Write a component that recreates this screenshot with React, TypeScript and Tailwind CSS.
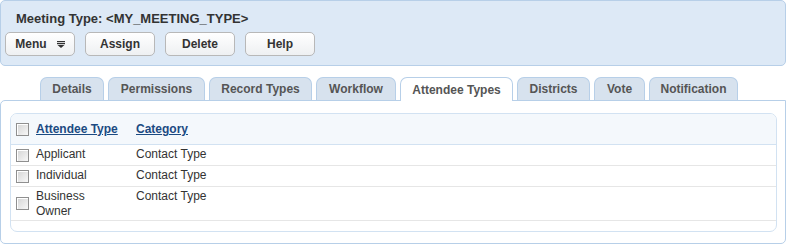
import React from 'react';

const tabs = [
  { label: 'Details', w: 'w-[64px]' },
  { label: 'Permissions', w: 'w-[97px]' },
  { label: 'Record Types', w: 'w-[103px]' },
  { label: 'Workflow', w: 'w-[80px]' },
  { label: 'Attendee Types', w: 'w-[113px]' },
  { label: 'Districts', w: 'w-[73px]' },
  { label: 'Vote', w: 'w-[51px]' },
  { label: 'Notification', w: 'w-[89px]' },
];

const rows = [
  { name: 'Applicant', category: 'Contact Type' },
  { name: 'Individual', category: 'Contact Type' },
  { name: 'Business Owner', category: 'Contact Type' },
];

const Checkbox: React.FC = () => (
  <span className="block w-[13px] h-[13px] border border-[#8f8f8f] bg-gradient-to-br from-[#d4d4d4] to-[#f8f8f8] shadow-[inset_1px_1px_0_#fff]" />
);

const MenuIcon: React.FC = () => (
  <svg width="8" height="7" viewBox="0 0 8 7" className="ml-[10px]">
    <rect x="0" y="0" width="8" height="1.2" fill="#333" />
    <rect x="0" y="2" width="8" height="1.2" fill="#333" />
    <path d="M0.5 4 L7.5 4 L4 7 Z" fill="#333" />
  </svg>
);

const Button: React.FC<{ label: string; icon?: boolean }> = ({ label, icon }) => (
  <button className="w-[70px] h-[24px] flex items-center justify-center rounded-[5px] border border-[#b8b8b8] bg-gradient-to-b from-[#ffffff] to-[#eef0f2] text-[12px] font-bold text-[#333]">
    {label}
    {icon && <MenuIcon />}
  </button>
);

export default function App() {
  return (
    <div className="w-[790px] h-[248px] bg-white font-['Liberation_Sans',Arial,sans-serif] text-[#333]">
      {/* Header */}
      <div className="w-[786px] h-[66px] bg-[#dde9f6] border border-[#b7cfe8] rounded-[5px] pt-[10px] pl-[15px]">
        <h1 className="text-[13px] font-bold text-[#333] leading-[15px]">Meeting Type: &lt;MY_MEETING_TYPE&gt;</h1>
        <div className="flex gap-[10px] mt-[6px] -ml-[11px]">
          <Button label="Menu" icon />
          <Button label="Assign" />
          <Button label="Delete" />
          <Button label="Help" />
        </div>
      </div>

      {/* Tabs */}
      <div className="flex items-end gap-[4px] pl-[40px] mt-[11px] relative z-10 h-[24px]">
        {tabs.map((t) => {
          const active = t.label === 'Attendee Types';
          return (
            <div
              key={t.label}
              className={
                active
                  ? `${t.w} h-[24px] flex items-center justify-center rounded-t-[7px] border border-b-0 border-[#b7cfe8] bg-white text-[12px] font-bold text-[#555]`
                  : `${t.w} h-[23px] mb-px flex items-center justify-center rounded-t-[7px] border border-b-0 border-[#b7cfe8] bg-[#d7e2ee] text-[12px] font-bold text-[#555]`
              }
            >
              {t.label}
            </div>
          );
        })}
      </div>

      {/* Content */}
      <div className="w-[786px] h-[144px] -mt-px border border-[#b7cfe8] rounded-[5px] rounded-tr-none pt-[12px] pl-[9px] pr-[8px]">
        <div className="border border-[#d2e2f2] rounded-[7px] overflow-hidden">
          <div className="flex items-center h-[31px] bg-[#f4f8fc] border-b border-[#d2e2f2]">
            <div className="w-[25px] pl-[5px]"><Checkbox /></div>
            <div className="w-[100px] text-[12px] font-bold text-[#1b4a82] underline">Attendee Type</div>
            <div className="text-[12px] font-bold text-[#1b4a82] underline">Category</div>
          </div>
          {rows.map((r) => (
            <div key={r.name} className="flex border-b border-[#e6e6e6] min-h-[21px]">
              <div className="w-[25px] pl-[5px] flex items-center"><Checkbox /></div>
              <div className="w-[100px] pr-[20px] text-[12px] leading-[15px] pt-[2px] pb-[1px]">{r.name}</div>
              <div className="text-[12px] leading-[15px] pt-[2px] pb-[1px]">{r.category}</div>
            </div>
          ))}
          <div className="h-[10px]" />
        </div>
      </div>
    </div>
  );
}
